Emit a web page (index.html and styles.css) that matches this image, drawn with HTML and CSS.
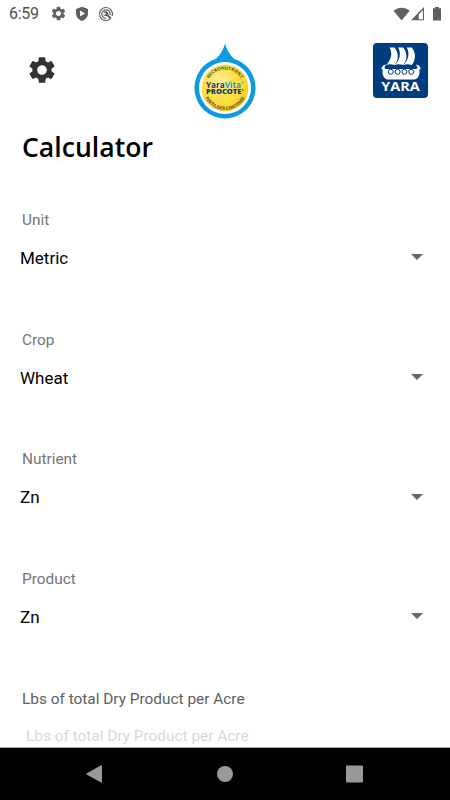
FILE: index.html
```html
<!DOCTYPE html>
<html lang="en">
<head>
  <meta charset="UTF-8">
  <meta name="viewport" content="width=device-width, initial-scale=1.0">
  <title>Calculator</title>
  <link rel="stylesheet" href="styles.css">
</head>
<body>
  <svg class="defs" width="0" height="0">
    <symbol id="gear" viewBox="0 0 24 24">
      <path d="M19.14 12.94c.04-.3.06-.61.06-.94 0-.32-.02-.64-.07-.94l2.03-1.58c.18-.14.23-.41.12-.61l-1.92-3.32c-.12-.22-.37-.29-.59-.22l-2.39.96c-.5-.38-1.03-.7-1.62-.94l-.36-2.54c-.04-.24-.24-.41-.48-.41h-3.84c-.24 0-.43.17-.47.41l-.36 2.54c-.59.24-1.13.57-1.62.94l-2.39-.96c-.22-.08-.47 0-.59.22L2.74 8.87c-.12.21-.08.47.12.61l2.03 1.58c-.05.3-.09.63-.09.94s.02.64.07.94l-2.03 1.58c-.18.14-.23.41-.12.61l1.92 3.32c.12.22.37.29.59.22l2.39-.96c.5.38 1.03.7 1.62.94l.36 2.54c.05.24.24.41.48.41h3.84c.24 0 .44-.17.47-.41l.36-2.54c.59-.24 1.13-.56 1.62-.94l2.39.96c.22.08.47 0 .59-.22l1.92-3.32c.12-.22.07-.47-.12-.61l-2.01-1.58zM12 15.6c-1.98 0-3.6-1.62-3.6-3.6s1.62-3.6 3.6-3.6 3.6 1.62 3.6 3.6-1.62 3.6-3.6 3.6z"/>
    </symbol>
  </svg>
  <div class="screen">
    <div class="status">
      <span class="time">6:59</span>
      <svg class="s-gear" width="17" height="17"><use href="#gear"/></svg>
      <svg class="s-shield" width="14" height="16" viewBox="0 0 14 16">
        <path fill-rule="evenodd" d="M7 .8L13 3v4.6c0 3.4-2.5 6.4-6 7.4-3.5-1-6-4-6-7.4V3zM5 4.600v6l5-3z"/>
      </svg>
      <svg class="s-circle" width="16" height="16" viewBox="0 0 16 16">
        <path class="line" d="M12.600 12.600A6.500 6.500 0 1 1 14.200 10"/>
        <path class="line" d="M8 12.200A4.200 4.200 0 1 1 12 9.200"/>
        <path d="M5 6.200c1.600-1.300 3.800-1 4.800.4.600.8.700 1.400.6 2.200l3.200 3.200-1.300 1.300-3.500-3.300c-1.600.2-3-.3-3.600-1.600l2 .3.900-1.100z"/>
      </svg>
      <svg class="s-right" width="50" height="16" viewBox="0 0 50 16">
        <path d="M.5 4.700C5.200.6 12 .6 16.700 4.700L8.600 14.400z"/>
        <path fill-rule="evenodd" d="M31 1v13.300H18zM30 4v9.300h-4.300V8.500z"/>
        <path d="M40 2.300h2V1h4v1.300h2v12.200h-8z"/>
      </svg>
    </div>

    <header class="header">
      <svg class="settings" width="32" height="32"><use href="#gear"/></svg>
      <svg class="drop" width="64" height="76" viewBox="0 0 64 76">
        <defs>
          <radialGradient id="gold" cx=".4" cy=".4" r=".65">
            <stop offset="0" stop-color="#fff3a6"/>
            <stop offset=".5" stop-color="#fee04a"/>
            <stop offset="1" stop-color="#f8cf1d"/>
          </radialGradient>
          <path id="arc-top" d="M13.500 45a18.500 18.500 0 0 1 37 0"/>
          <path id="arc-bottom" d="M10 45a22 22 0 0 0 44 0"/>
        </defs>
        <path fill="#0a9be0" d="M32 .5c1.500 6 4.500 11 9 15.300A30.500 30.500 0 1 1 23 15.800C27.500 11.500 30.500 6.500 32 .5z"/>
        <circle cx="32" cy="45" r="26" fill="#fff"/>
        <circle cx="32" cy="45" r="23.400" fill="url(#gold)"/>
        <text class="arc"><textPath href="#arc-top" startOffset="50%">MICRONUTRIENT</textPath></text>
        <text class="arc"><textPath href="#arc-bottom" startOffset="50%">FERTILISER COATINGS</textPath></text>
        <text class="brand" x="13" y="45" textLength="35" lengthAdjust="spacingAndGlyphs">Yara<tspan fill="#159bd7">Vita</tspan></text>
        <text class="procote" x="13" y="51.300" textLength="35.500" lengthAdjust="spacingAndGlyphs">PROCOTE</text>
        <circle cx="49.500" cy="39.500" r=".8" fill="#159bd7"/>
        <circle cx="49.800" cy="47" r=".8" fill="#17375e"/>
      </svg>
      <svg class="yara" width="55" height="55" viewBox="0 0 55 55">
        <rect width="55" height="55" rx="4" fill="#003d7f"/>
        <g fill="#fff">
          <path id="sail" d="M16.500 4.500h5c4.400 5.500 4.400 12 .1 17.600-3-1-5.500-1-8.500-.2 5.500-5 6.600-12 3.400-17.400z"/>
          <use href="#sail" x="8.600"/>
          <use href="#sail" x="17.200"/>
          <path d="M8.300 26.300c.3-2.800 2.500-5 5.200-4.300-2 .8-2.500 2.500-1.500 3.500.6.500 1.500.5 2.500.5h27c1 0 2 0 2.500-.5 1-1 .5-2.700-1.500-3.500 2.700-.7 4.900 1.500 5.200 4.300-1.200-.2-1.500.3-1.300 1.600.5 4.900-2 8.600-6.400 8.600H16c-4.400 0-6.900-3.700-6.400-8.600.2-1.300-.1-1.800-1.300-1.600z"/>
        </g>
        <g fill="#fff" stroke="#003d7f" stroke-width="1">
          <circle cx="17.800" cy="28.800" r="2.500"/>
          <circle cx="24.600" cy="28.800" r="2.500"/>
          <circle cx="31.400" cy="28.800" r="2.500"/>
          <circle cx="38.200" cy="28.800" r="2.500"/>
        </g>
        <text class="yara-text" x="8.300" y="48" textLength="38.500" lengthAdjust="spacingAndGlyphs">YARA</text>
      </svg>
    </header>

    <main class="content">
      <h1>Calculator</h1>
      <div class="field">
        <label>Unit</label>
        <div class="select"><span>Metric</span><i class="caret"></i></div>
      </div>
      <div class="field">
        <label>Crop</label>
        <div class="select"><span>Wheat</span><i class="caret"></i></div>
      </div>
      <div class="field">
        <label>Nutrient</label>
        <div class="select"><span>Zn</span><i class="caret"></i></div>
      </div>
      <div class="field">
        <label>Product</label>
        <div class="select"><span>Zn</span><i class="caret"></i></div>
      </div>
      <div class="field">
        <label class="dark">Lbs of total Dry Product per Acre</label>
        <div class="input">Lbs of total Dry Product per Acre</div>
      </div>
    </main>

    <nav class="navbar">
      <svg width="450" height="52" viewBox="0 0 450 52" fill="#999">
        <path d="M86.500 25.500L101 17.300q1-.4 1 .7v16q0 1-1 .6L86.500 26.500q-.6-.5 0-1z"/>
        <circle cx="225" cy="26" r="8"/>
        <rect x="346" y="17.500" width="17" height="17" rx="1"/>
      </svg>
    </nav>
  </div>
</body>
</html>
```
FILE: styles.css
```css
* {
  box-sizing: border-box;
}
html,
body {
  margin: 0;
  padding: 0;
  background: #fff;
  font-family: Roboto, "Liberation Sans", sans-serif;
}
.defs {
  display: block;
}
.screen {
  display: flex;
  flex-direction: column;
  width: 450px;
  height: 800px;
  overflow: hidden;
}

/* status bar */
.status {
  display: flex;
  align-items: center;
  flex: none;
  height: 27px;
  padding: 0 7px 0 9px;
  color: #505050;
  fill: #606060;
}
.time {
  width: 41px;
  font-size: 16px;
  letter-spacing: -0.3px;
}
.s-shield {
  margin-left: 8px;
}
.s-circle {
  margin-left: 9px;
}
.s-circle .line {
  fill: none;
  stroke: #606060;
  stroke-width: 1.2;
}
.s-right {
  margin-left: auto;
}

.header {
  display: flex;
  justify-content: space-between;
  align-items: flex-start;
  flex: none;
  height: 100px;
  padding: 16px 22px 0 26px;
}
.settings {
  margin-top: 11px;
  fill: #333;
}
.drop {
  margin-left: 19px;
}
.arc {
  font: bold 4.5px "Open Sans", sans-serif;
  fill: #4f4a2c;
  text-anchor: middle;
}
.brand {
  font: bold 9.5px "Open Sans", sans-serif;
  fill: #17375e;
}
.procote {
  font: 800 7.5px "Open Sans", sans-serif;
  fill: #17375e;
}
.yara-text {
  font: bold 13px "Open Sans", sans-serif;
  fill: #fff;
}

/* form */
.content {
  flex: 1;
  min-height: 0;
  overflow: hidden;
  padding: 0 22px;
}
h1 {
  height: 82.9px;
  margin: 0;
  font: 600 26.6px/41px "Open Sans", sans-serif;
  color: #000;
}
.field {
  height: 119.7px;
}
label {
  display: block;
  font-size: 15.4px;
  line-height: 20px;
  color: #757575;
}
label.dark {
  color: #606060;
}
.select {
  display: flex;
  justify-content: space-between;
  align-items: center;
  height: 20px;
  margin: 18px 5px 0 -2px;
  font-size: 17px;
  color: #000;
}
.caret {
  margin-bottom: 1px;
  border: 6px solid transparent;
  border-top-color: #666;
  border-bottom: 0;
}
.input {
  margin: 17px 0 0 4px;
  font-size: 15.4px;
  line-height: 20px;
  color: #d8d8d8;
}

.navbar {
  flex: none;
  height: 53px;
  border-top: 1px solid #aaa;
  background: #000;
}
.navbar svg {
  display: block;
}
```
